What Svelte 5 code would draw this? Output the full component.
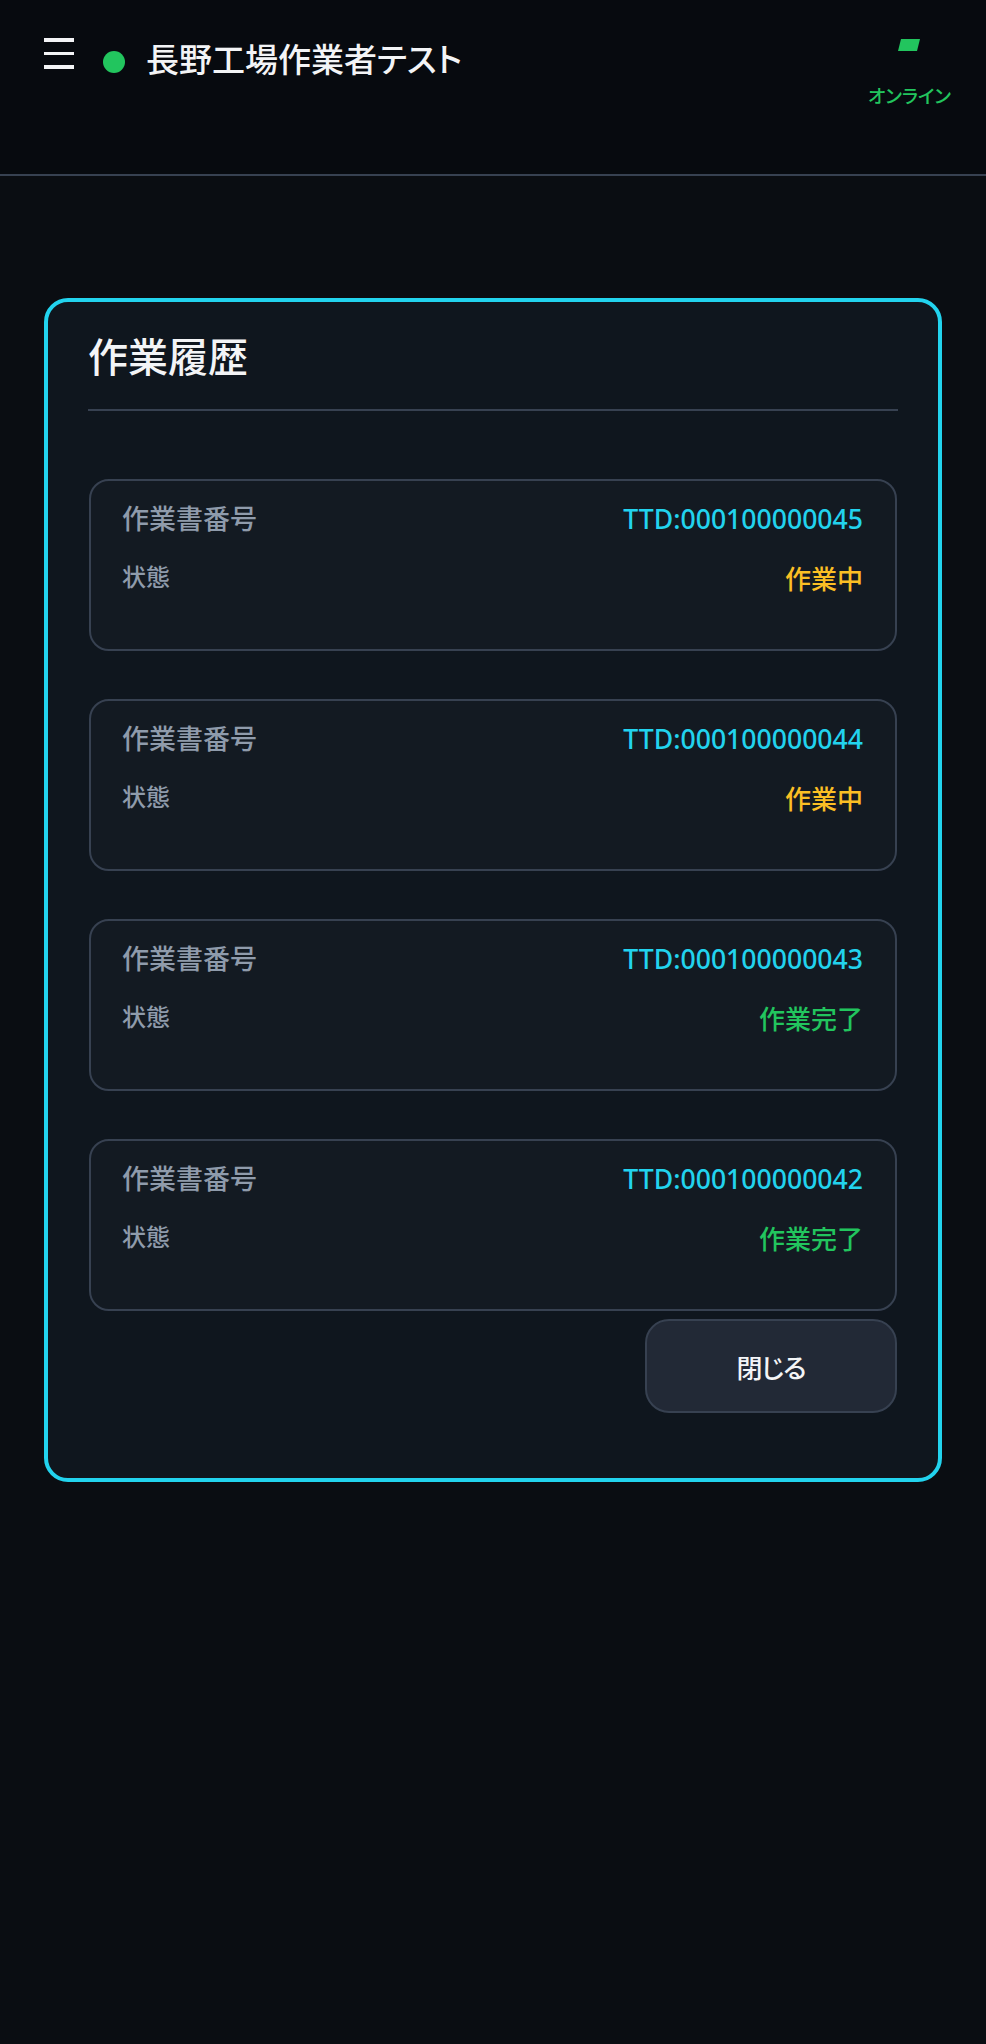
<script lang="ts">
	const jobs = [
		{ no: 'TTD:000100000045', status: '作業中', done: false },
		{ no: 'TTD:000100000044', status: '作業中', done: false },
		{ no: 'TTD:000100000043', status: '作業完了', done: true },
		{ no: 'TTD:000100000042', status: '作業完了', done: true }
	];
</script>

<div class="page">
	<header class="topbar">
		<button class="menu" aria-label="メニュー">
			<span></span>
			<span></span>
			<span></span>
		</button>
		<span class="dot"></span>
		<h1 class="worker">長野工場作業者テスト</h1>
		<div class="net">
			<svg class="signal" width="22" height="12" viewBox="0 0 22 12" aria-hidden="true">
				<polygon points="3,0 22,0 19,12 0,12" fill="#22c55e" />
			</svg>
			<span class="net-label">オンライン</span>
		</div>
	</header>

	<section class="panel">
		<h2 class="panel-title">作業履歴</h2>
		<ul class="jobs">
			{#each jobs as job}
				<li class="job">
					<div class="row">
						<span class="label">作業書番号</span>
						<span class="no">{job.no}</span>
					</div>
					<div class="row">
						<span class="label small">状態</span>
						<span class="status" class:done={job.done}>{job.status}</span>
					</div>
				</li>
			{/each}
		</ul>
		<div class="actions">
			<button class="close">閉じる</button>
		</div>
	</section>
</div>

<style>
	:global(body) {
		background: #0a0d12;
	}

	.page {
		min-height: 2044px;
		background: #0a0d12;
		font-family: 'Noto Sans CJK JP', 'Noto Sans', sans-serif;
		font-feature-settings: 'palt';
		color: #f3f4f6;
		overflow: hidden;
	}

	.topbar {
		display: flex;
		align-items: flex-start;
		height: 174px;
		box-sizing: content-box;
		padding: 0 35px 0 44px;
		background: #070a0f;
		border-bottom: 2px solid #374151;
	}

	.menu {
		display: flex;
		flex-direction: column;
		gap: 10px;
		width: 30px;
		margin-top: 38px;
		padding: 0;
		background: none;
		border: none;
	}

	.menu span {
		display: block;
		height: 3.5px;
		background: #f3f4f6;
	}

	.dot {
		width: 22px;
		height: 22px;
		margin: 51px 0 0 29px;
		border-radius: 50%;
		background: #22c55e;
	}

	.worker {
		margin: 34px 0 0 21px;
		font-size: 33px;
		line-height: 48px;
		font-weight: 500;
	}

	.net {
		display: flex;
		flex-direction: column;
		align-items: center;
		margin-left: auto;
		padding-top: 39px;
	}

	.signal {
		display: block;
	}

	.net-label {
		margin-top: 29px;
		font-size: 18.7px;
		line-height: 30px;
		font-weight: 500;
		color: #22c55e;
	}

	.panel {
		margin: 122px 44px 0;
		padding: 23px 40px 65px;
		background: #0f161e;
		border: 4px solid #22d3ee;
		border-radius: 24px;
	}

	.panel-title {
		margin: 0;
		padding-bottom: 24px;
		font-size: 40px;
		line-height: 60px;
		font-weight: 500;
		border-bottom: 2px solid #374151;
	}

	.jobs {
		display: flex;
		flex-direction: column;
		gap: 48px;
		margin: 68px 1px 0;
		padding: 0;
		list-style: none;
	}

	.job {
		height: 172px;
		box-sizing: border-box;
		padding: 17px 32px 17px 31px;
		background: #131a22;
		border: 2px solid #374151;
		border-radius: 20px;
	}

	.row {
		display: flex;
		justify-content: space-between;
		align-items: flex-start;
		margin-bottom: 19px;
	}

	.label {
		font-size: 27px;
		line-height: 40px;
		font-weight: 500;
		color: #8f9bab;
	}

	.label.small {
		font-size: 24px;
		line-height: 36px;
	}

	.no {
		padding-top: 1px;
		font-family: 'Noto Sans', 'Noto Sans CJK JP', sans-serif;
		font-size: 26.6px;
		line-height: 40px;
		font-weight: 500;
		color: #22d3ee;
	}

	.status {
		font-size: 26px;
		line-height: 40px;
		font-weight: 500;
		color: #fbbf24;
	}

	.status.done {
		color: #22c55e;
	}

	.actions {
		display: flex;
		justify-content: flex-end;
		margin: 8px 1px 0 0;
	}

	.close {
		width: 252px;
		height: 94px;
		font: inherit;
		font-size: 26px;
		letter-spacing: -1px;
		font-weight: 500;
		color: #f3f4f6;
		background: #222936;
		border: 2px solid #374151;
		border-radius: 24px;
	}
</style>
